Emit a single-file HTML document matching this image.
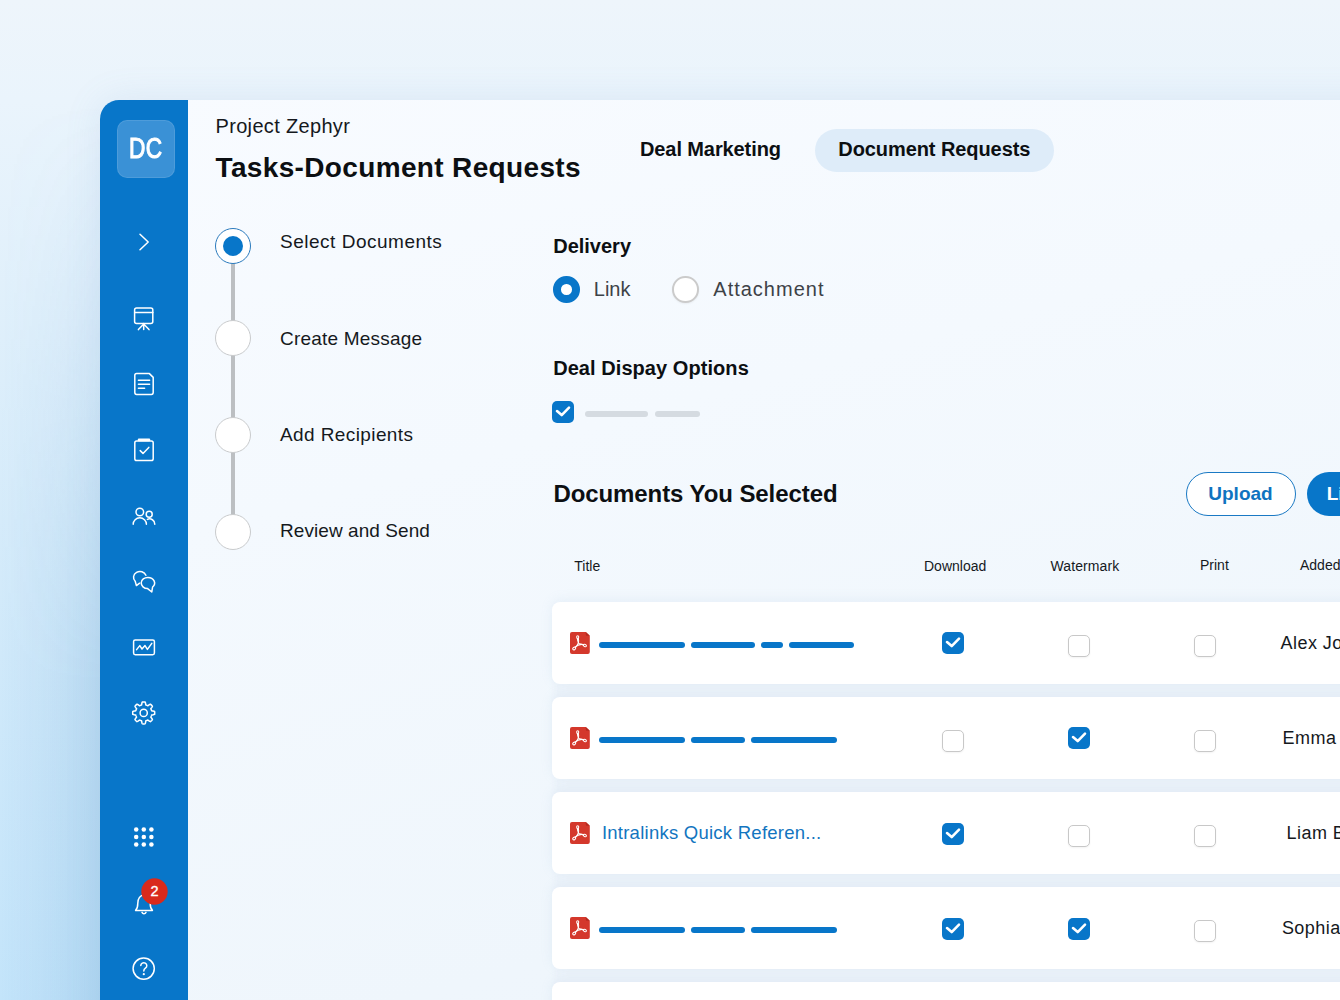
<!DOCTYPE html>
<html lang="en"><head><meta charset="utf-8"><title>Tasks-Document Requests</title>
<style>
*{box-sizing:border-box;margin:0;padding:0}
html,body{width:1340px;height:1000px;overflow:hidden}
body{position:relative;font-family:"Liberation Sans",sans-serif;background:#eef5fb;
 background-image:linear-gradient(180deg,#eef5fb 0,#eaf4fc 100px,#d5ebfa 520px,#c3e4fa 1000px);}
.t{position:absolute;line-height:1;white-space:nowrap}
.abs{position:absolute}
#panel{position:absolute;left:100px;top:100px;width:1300px;height:960px;background:linear-gradient(165deg,#f8fbff 0%,#f4f9fe 35%,#eff6fc 75%,#edf5fc 100%);border-top-left-radius:19px;box-shadow:0 0 36px rgba(110,150,195,.13);overflow:hidden}
#side{position:absolute;left:0;top:0;width:88px;height:100%;background:#0876c9}
.row{position:absolute;left:552px;width:900px;height:81.4px;background:#fff;border-radius:8px;box-shadow:0 -2px 12px rgba(150,175,205,.13)}
#gapbg{position:absolute;left:557px;top:616px;width:900px;height:500px;background:#ecf3fa;box-shadow:0 0 6px 3px #ecf3fa}
.cb{position:absolute;width:22px;height:22px;border-radius:5px}
.cb.on{background:#0876c9}
.cb.off{background:#fff;border:1.6px solid #c8c8c8;box-shadow:0 1px 2px rgba(0,0,0,.05)}
.bar{position:absolute;height:6px;border-radius:3px;background:#0876c9}
.gbar{position:absolute;height:6px;border-radius:3px;background:#d5dbe1}
.step{position:absolute;width:36px;height:36px;border-radius:50%;background:#fff;border:1px solid #c9cbcd}
svg{position:absolute;overflow:visible}
</style></head><body>
<div class="abs" style="left:0;top:100px;width:100px;height:900px;background:linear-gradient(90deg,rgba(70,140,200,0) 0%,rgba(70,140,200,.05) 40%,rgba(70,140,200,.16) 100%);-webkit-mask-image:linear-gradient(180deg,transparent 0,rgba(0,0,0,.35) 25%,#000 65%);mask-image:linear-gradient(180deg,transparent 0,rgba(0,0,0,.35) 25%,#000 65%)"></div>
<div id="panel"><div id="side"></div></div>
<div class="abs" style="left:117px;top:120px;width:57.5px;height:58px;border-radius:10px;background:#3a91d6;box-shadow:inset 0 0 0 1px rgba(255,255,255,.10)"></div>
<div class="t" id="dc" style="left:128.9px;top:134.15px;font-size:29px;font-weight:400;color:#fff;letter-spacing:0.6px;transform:scaleX(.78);transform-origin:left;-webkit-text-stroke:1.1px #fff;">DC</div>
<svg width="1340" height="1000" viewBox="0 0 1340 1000" style="left:0;top:0"><g fill="none" stroke="#fff" stroke-width="1.5" stroke-linecap="round" stroke-linejoin="round"><path d="M140 234.2 L148.2 242 L140 249.8"/><rect x="134.6" y="308" width="18.2" height="15.4" rx="2"/><path d="M134.6 312.4H152.8M143.7 323.6V329.6M143.7 324L138.4 329.6M143.7 324L149 329.6"/><path d="M136.6 373.6H149.4L153.2 377.4V392.6A1.8 1.8 0 0 1 151.4 394.4H136.6A1.8 1.8 0 0 1 134.8 392.6V375.4A1.8 1.8 0 0 1 136.6 373.6Z"/><path d="M138.4 380.2H149.6M138.4 384.3H149.6M138.4 388.3H144.6"/><rect x="134.8" y="441" width="18.4" height="19.6" rx="1.8"/><path d="M139 439.9H149" stroke-width="2.6"/><path d="M140.2 450.6L143 453.4L148.8 447.4"/><circle cx="139.8" cy="512" r="3.8"/><path d="M133.2 524.2A6.6 6.4 0 0 1 146.4 524.2"/><circle cx="149.2" cy="514.2" r="3"/><path d="M147.4 519.4A5.2 5.2 0 0 1 154.8 524.2"/><path d="M145.9 575.2A6.4 5.8 0 1 0 135.2 581.2L136.4 585.6L139.6 583.2"/><path d="M148 577.4A6.6 5.6 0 0 1 152.6 587L151.8 592L147.6 588.6A6.6 5.6 0 0 1 148 577.4Z"/><rect x="133.6" y="639.9" width="20.8" height="14.8" rx="1.6"/><path d="M136.6 649.6L139.8 645.6L142 649L145 645.6L147.4 649.4L151.8 643.4"/><path d="M143.70 701.90 L144.06 701.91 L144.42 701.92 L144.78 701.95 L145.14 701.99 L145.39 702.64 L145.57 703.48 L145.70 704.33 L145.82 704.98 L146.08 705.05 L146.34 705.14 L146.59 705.23 L146.84 705.32 L147.08 705.43 L147.33 705.55 L147.57 705.67 L147.80 705.80 L148.35 705.42 L149.03 704.92 L149.76 704.45 L150.40 704.17 L150.68 704.40 L150.95 704.63 L151.22 704.87 L151.48 705.12 L151.73 705.38 L151.97 705.65 L152.20 705.92 L152.43 706.20 L152.15 706.84 L151.68 707.57 L151.18 708.25 L150.80 708.80 L150.93 709.03 L151.05 709.27 L151.17 709.52 L151.28 709.76 L151.37 710.01 L151.46 710.26 L151.55 710.52 L151.62 710.78 L152.27 710.90 L153.12 711.03 L153.96 711.21 L154.61 711.46 L154.65 711.82 L154.68 712.18 L154.69 712.54 L154.70 712.90 L154.69 713.26 L154.68 713.62 L154.65 713.98 L154.61 714.34 L153.96 714.59 L153.12 714.77 L152.27 714.90 L151.62 715.02 L151.55 715.28 L151.46 715.54 L151.37 715.79 L151.28 716.04 L151.17 716.28 L151.05 716.53 L150.93 716.77 L150.80 717.00 L151.18 717.55 L151.68 718.23 L152.15 718.96 L152.43 719.60 L152.20 719.88 L151.97 720.15 L151.73 720.42 L151.48 720.68 L151.22 720.93 L150.95 721.17 L150.68 721.40 L150.40 721.63 L149.76 721.35 L149.03 720.88 L148.35 720.38 L147.80 720.00 L147.57 720.13 L147.33 720.25 L147.08 720.37 L146.84 720.48 L146.59 720.57 L146.34 720.66 L146.08 720.75 L145.82 720.82 L145.70 721.47 L145.57 722.32 L145.39 723.16 L145.14 723.81 L144.78 723.85 L144.42 723.88 L144.06 723.89 L143.70 723.90 L143.34 723.89 L142.98 723.88 L142.62 723.85 L142.26 723.81 L142.01 723.16 L141.83 722.32 L141.70 721.47 L141.58 720.82 L141.32 720.75 L141.06 720.66 L140.81 720.57 L140.56 720.48 L140.32 720.37 L140.07 720.25 L139.83 720.13 L139.60 720.00 L139.05 720.38 L138.37 720.88 L137.64 721.35 L137.00 721.63 L136.72 721.40 L136.45 721.17 L136.18 720.93 L135.92 720.68 L135.67 720.42 L135.43 720.15 L135.20 719.88 L134.97 719.60 L135.25 718.96 L135.72 718.23 L136.22 717.55 L136.60 717.00 L136.47 716.77 L136.35 716.53 L136.23 716.28 L136.12 716.04 L136.03 715.79 L135.94 715.54 L135.85 715.28 L135.78 715.02 L135.13 714.90 L134.28 714.77 L133.44 714.59 L132.79 714.34 L132.75 713.98 L132.72 713.62 L132.71 713.26 L132.70 712.90 L132.71 712.54 L132.72 712.18 L132.75 711.82 L132.79 711.46 L133.44 711.21 L134.28 711.03 L135.13 710.90 L135.78 710.78 L135.85 710.52 L135.94 710.26 L136.03 710.01 L136.12 709.76 L136.23 709.52 L136.35 709.27 L136.47 709.03 L136.60 708.80 L136.22 708.25 L135.72 707.57 L135.25 706.84 L134.97 706.20 L135.20 705.92 L135.43 705.65 L135.67 705.38 L135.92 705.12 L136.18 704.87 L136.45 704.63 L136.72 704.40 L137.00 704.17 L137.64 704.45 L138.37 704.92 L139.05 705.42 L139.60 705.80 L139.83 705.67 L140.07 705.55 L140.32 705.43 L140.56 705.32 L140.81 705.23 L141.06 705.14 L141.32 705.05 L141.58 704.98 L141.70 704.33 L141.83 703.48 L142.01 702.64 L142.26 701.99 L142.62 701.95 L142.98 701.92 L143.34 701.91Z"/><circle cx="143.7" cy="712.9" r="3.6"/><path d="M135.6 910.4H152.4C150.6 908.6 150.2 906.4 150.2 903.2C150.2 898.6 147.8 895 144 895C140.2 895 137.8 898.6 137.8 903.2C137.8 906.4 137.4 908.6 135.6 910.4Z"/><path d="M142 912.4A2.2 2.2 0 0 0 146 912.4"/><circle cx="143.7" cy="968.6" r="10.6"/><path d="M140.8 965.6A3 3 0 1 1 145.4 968.2C144.2 969 143.8 969.6 143.8 971"/></g><circle cx="143.8" cy="974.2" r="1.1" fill="#fff"/><circle cx="136.2" cy="829.6" r="2.25" fill="#fff"/><circle cx="136.2" cy="837.1" r="2.25" fill="#fff"/><circle cx="136.2" cy="844.6" r="2.25" fill="#fff"/><circle cx="143.8" cy="829.6" r="2.25" fill="#fff"/><circle cx="143.8" cy="837.1" r="2.25" fill="#fff"/><circle cx="143.8" cy="844.6" r="2.25" fill="#fff"/><circle cx="151.4" cy="829.6" r="2.25" fill="#fff"/><circle cx="151.4" cy="837.1" r="2.25" fill="#fff"/><circle cx="151.4" cy="844.6" r="2.25" fill="#fff"/><circle cx="154.5" cy="891.5" r="13.2" fill="#d92a1c"/></svg>
<div class="t" id="badge" style="left:150.4px;top:884.43px;font-size:14.5px;font-weight:400;color:#fff;letter-spacing:0px;-webkit-text-stroke:0.35px #fff;">2</div>
<div class="t" id="proj" style="left:215.5px;top:115.87px;font-size:20px;font-weight:400;color:#15191d;letter-spacing:0.33px;">Project Zephyr</div>
<div class="t" id="title" style="left:215.5px;top:154.00px;font-size:28px;font-weight:700;color:#0c0f12;letter-spacing:0.35px;">Tasks-Document Requests</div>
<div class="t" id="tab1" style="left:640px;top:139.07px;font-size:20px;font-weight:700;color:#0c0f12;letter-spacing:-0.1px;">Deal Marketing</div>
<div class="abs" style="left:815px;top:128.5px;width:239px;height:43.5px;border-radius:22px;background:#deecf9"></div>
<div class="t" id="tab2" style="left:838.3px;top:139.07px;font-size:20px;font-weight:700;color:#0c0f12;letter-spacing:-0.08px;">Document Requests</div>
<div class="abs" style="left:231.2px;top:250px;width:3.6px;height:280px;background:#bcbfc2"></div>
<div class="step" style="left:215.1px;top:228.2px;border:1.3px solid #2a7abd"></div>
<div class="abs" style="left:222.9px;top:236px;width:20.2px;height:20.2px;border-radius:50%;background:#0876c9"></div>
<div class="step" style="left:215px;top:320.2px"></div>
<div class="step" style="left:215px;top:417.2px"></div>
<div class="step" style="left:215px;top:513.6px"></div>
<div class="t" id="s1" style="left:280px;top:232.32px;font-size:19px;font-weight:400;color:#15191d;letter-spacing:0.51px;">Select Documents</div>
<div class="t" id="s2" style="left:280px;top:328.72px;font-size:19px;font-weight:400;color:#15191d;letter-spacing:0.21px;">Create Message</div>
<div class="t" id="s3" style="left:280px;top:424.82px;font-size:19px;font-weight:400;color:#15191d;letter-spacing:0.4px;">Add Recipients</div>
<div class="t" id="s4" style="left:280px;top:521.22px;font-size:19px;font-weight:400;color:#15191d;letter-spacing:0.07px;">Review and Send</div>
<div class="t" id="deliv" style="left:553.2px;top:235.57px;font-size:20px;font-weight:700;color:#0c0f12;letter-spacing:0px;">Delivery</div>
<div class="abs" style="left:553px;top:276px;width:26.5px;height:26.5px;border-radius:50%;border:8px solid #0876c9;background:#fff"></div>
<div class="t" id="link" style="left:593.8px;top:279.17px;font-size:20px;font-weight:400;color:#3d4247;letter-spacing:0px;">Link</div>
<div class="abs" style="left:672px;top:276px;width:26.5px;height:26.5px;border-radius:50%;border:2px solid #cbcbcb;background:#fff;box-shadow:0 1px 2px rgba(0,0,0,.05)"></div>
<div class="t" id="attach" style="left:713.3px;top:279.17px;font-size:20px;font-weight:400;color:#3d4247;letter-spacing:1.0px;">Attachment</div>
<div class="t" id="ddo" style="left:553.2px;top:357.67px;font-size:20px;font-weight:700;color:#0c0f12;letter-spacing:0.06px;">Deal Dispay Options</div>
<div class="cb on" style="left:552px;top:401px"><svg width="22" height="22" viewBox="0 0 22 22" style="left:0;top:0"><path d="M5 10.1 L9.7 14.1 L17 6.7" fill="none" stroke="#fff" stroke-width="2.6" stroke-linecap="round" stroke-linejoin="round"/></svg></div>
<div class="gbar" style="left:585px;top:410.6px;width:63px"></div><div class="gbar" style="left:655px;top:410.6px;width:45px"></div>
<div class="t" id="dys" style="left:553.4px;top:481.88px;font-size:24px;font-weight:700;color:#0c0f12;letter-spacing:-0.08px;">Documents You Selected</div>
<div class="abs" style="left:1186px;top:472px;width:109.5px;height:44px;border-radius:22px;border:1.8px solid #1a79c4;background:#fff"></div>
<div class="t" id="upload" style="left:1208.3px;top:483.92px;font-size:19px;font-weight:700;color:#0f73c0;letter-spacing:0px;">Upload</div>
<div class="abs" style="left:1307px;top:472px;width:109.5px;height:44px;border-radius:22px;background:#0876c9"></div>
<div class="t" id="li" style="left:1326.75px;top:483.92px;font-size:19px;font-weight:700;color:#fff;letter-spacing:0px;">Link</div>
<div class="t" id="hTitle" style="left:574.3px;top:559.05px;font-size:14px;font-weight:400;color:#15191d;letter-spacing:0px;">Title</div>
<div class="t" id="hDown" style="left:924px;top:559.05px;font-size:14px;font-weight:400;color:#15191d;letter-spacing:0px;">Download</div>
<div class="t" id="hWater" style="left:1050.5px;top:559.05px;font-size:14px;font-weight:400;color:#15191d;letter-spacing:0.1px;">Watermark</div>
<div class="t" id="hPrint" style="left:1200px;top:557.85px;font-size:14px;font-weight:400;color:#15191d;letter-spacing:0px;">Print</div>
<div class="t" id="hAdded" style="left:1300px;top:557.85px;font-size:14px;font-weight:400;color:#15191d;letter-spacing:0px;">Added by</div>
<div id="gapbg"></div>
<div class="row" style="top:602.2px"><svg width="19.8" height="22.1" viewBox="0 0 19.8 22.1" style="left:18px;top:29.7px"><path d="M2 0H15.8L19.8 3.8V20.1A2 2 0 0 1 17.8 22.1H2A2 2 0 0 1 0 20.1V2A2 2 0 0 1 2 0Z" fill="#d4382c"/><path d="M15.8 0L19.8 3.8H16.8A1 1 0 0 1 15.8 2.8Z" fill="#b52a20"/><g fill="none" stroke="#fff" stroke-width="1.05" stroke-linecap="round" stroke-linejoin="round"><path d="M7.3 6.2C7.4 8.4 8 10.2 8.9 11.6C10.6 12 12.2 12.5 13.5 13.2"/><path d="M8.3 6.2C8.9 8 8.6 10 8 11.8C7.2 13.4 6.2 14.8 5.4 15.6"/><path d="M5 15.2C6.8 13.4 10 12 13.4 12.5"/><ellipse cx="7.7" cy="5.1" rx="1.05" ry="1.4"/><ellipse cx="4.2" cy="16.5" rx="1.6" ry="1.2" transform="rotate(-35 4.2 16.5)"/><ellipse cx="14.9" cy="13.5" rx="1.6" ry="1.1" transform="rotate(22 14.9 13.5)"/></g></svg><div class="bar" style="left:46.8px;top:39.7px;width:86.6px"></div><div class="bar" style="left:138.7px;top:39.7px;width:64.8px"></div><div class="bar" style="left:209.2px;top:39.7px;width:22.1px"></div><div class="bar" style="left:236.7px;top:39.7px;width:65.3px"></div><div class="cb on" style="left:389.5px;top:30.3px"><svg width="22" height="22" viewBox="0 0 22 22" style="left:0;top:0"><path d="M5 10.1 L9.7 14.1 L17 6.7" fill="none" stroke="#fff" stroke-width="2.6" stroke-linecap="round" stroke-linejoin="round"/></svg></div><div class="cb off" style="left:515.6px;top:33px"></div><div class="cb off" style="left:641.9px;top:33px"></div></div>
<div class="t" id="nm0" style="left:1280.6px;top:633.96px;font-size:18px;font-weight:400;color:#15191d;letter-spacing:0.45px;">Alex Johnson</div>
<div class="row" style="top:697.2px"><svg width="19.8" height="22.1" viewBox="0 0 19.8 22.1" style="left:18px;top:29.7px"><path d="M2 0H15.8L19.8 3.8V20.1A2 2 0 0 1 17.8 22.1H2A2 2 0 0 1 0 20.1V2A2 2 0 0 1 2 0Z" fill="#d4382c"/><path d="M15.8 0L19.8 3.8H16.8A1 1 0 0 1 15.8 2.8Z" fill="#b52a20"/><g fill="none" stroke="#fff" stroke-width="1.05" stroke-linecap="round" stroke-linejoin="round"><path d="M7.3 6.2C7.4 8.4 8 10.2 8.9 11.6C10.6 12 12.2 12.5 13.5 13.2"/><path d="M8.3 6.2C8.9 8 8.6 10 8 11.8C7.2 13.4 6.2 14.8 5.4 15.6"/><path d="M5 15.2C6.8 13.4 10 12 13.4 12.5"/><ellipse cx="7.7" cy="5.1" rx="1.05" ry="1.4"/><ellipse cx="4.2" cy="16.5" rx="1.6" ry="1.2" transform="rotate(-35 4.2 16.5)"/><ellipse cx="14.9" cy="13.5" rx="1.6" ry="1.1" transform="rotate(22 14.9 13.5)"/></g></svg><div class="bar" style="left:46.8px;top:39.7px;width:86.6px"></div><div class="bar" style="left:138.7px;top:39.7px;width:54.3px"></div><div class="bar" style="left:199.0px;top:39.7px;width:86.0px"></div><div class="cb off" style="left:389.5px;top:33px"></div><div class="cb on" style="left:515.6px;top:30.3px"><svg width="22" height="22" viewBox="0 0 22 22" style="left:0;top:0"><path d="M5 10.1 L9.7 14.1 L17 6.7" fill="none" stroke="#fff" stroke-width="2.6" stroke-linecap="round" stroke-linejoin="round"/></svg></div><div class="cb off" style="left:641.9px;top:33px"></div></div>
<div class="t" id="nm1" style="left:1282.6px;top:728.96px;font-size:18px;font-weight:400;color:#15191d;letter-spacing:0.45px;">Emma Wilson</div>
<div class="row" style="top:792.3px"><svg width="19.8" height="22.1" viewBox="0 0 19.8 22.1" style="left:18px;top:29.7px"><path d="M2 0H15.8L19.8 3.8V20.1A2 2 0 0 1 17.8 22.1H2A2 2 0 0 1 0 20.1V2A2 2 0 0 1 2 0Z" fill="#d4382c"/><path d="M15.8 0L19.8 3.8H16.8A1 1 0 0 1 15.8 2.8Z" fill="#b52a20"/><g fill="none" stroke="#fff" stroke-width="1.05" stroke-linecap="round" stroke-linejoin="round"><path d="M7.3 6.2C7.4 8.4 8 10.2 8.9 11.6C10.6 12 12.2 12.5 13.5 13.2"/><path d="M8.3 6.2C8.9 8 8.6 10 8 11.8C7.2 13.4 6.2 14.8 5.4 15.6"/><path d="M5 15.2C6.8 13.4 10 12 13.4 12.5"/><ellipse cx="7.7" cy="5.1" rx="1.05" ry="1.4"/><ellipse cx="4.2" cy="16.5" rx="1.6" ry="1.2" transform="rotate(-35 4.2 16.5)"/><ellipse cx="14.9" cy="13.5" rx="1.6" ry="1.1" transform="rotate(22 14.9 13.5)"/></g></svg><div class="cb on" style="left:389.5px;top:30.3px"><svg width="22" height="22" viewBox="0 0 22 22" style="left:0;top:0"><path d="M5 10.1 L9.7 14.1 L17 6.7" fill="none" stroke="#fff" stroke-width="2.6" stroke-linecap="round" stroke-linejoin="round"/></svg></div><div class="cb off" style="left:515.6px;top:33px"></div><div class="cb off" style="left:641.9px;top:33px"></div></div>
<div class="t" id="lnk2" style="left:601.9px;top:823.64px;font-size:18.5px;font-weight:400;color:#1275c0;letter-spacing:0.25px;">Intralinks Quick Referen...</div>
<div class="t" id="nm2" style="left:1286.6px;top:824.06px;font-size:18px;font-weight:400;color:#15191d;letter-spacing:0.45px;">Liam Brown</div>
<div class="row" style="top:887.4px"><svg width="19.8" height="22.1" viewBox="0 0 19.8 22.1" style="left:18px;top:29.7px"><path d="M2 0H15.8L19.8 3.8V20.1A2 2 0 0 1 17.8 22.1H2A2 2 0 0 1 0 20.1V2A2 2 0 0 1 2 0Z" fill="#d4382c"/><path d="M15.8 0L19.8 3.8H16.8A1 1 0 0 1 15.8 2.8Z" fill="#b52a20"/><g fill="none" stroke="#fff" stroke-width="1.05" stroke-linecap="round" stroke-linejoin="round"><path d="M7.3 6.2C7.4 8.4 8 10.2 8.9 11.6C10.6 12 12.2 12.5 13.5 13.2"/><path d="M8.3 6.2C8.9 8 8.6 10 8 11.8C7.2 13.4 6.2 14.8 5.4 15.6"/><path d="M5 15.2C6.8 13.4 10 12 13.4 12.5"/><ellipse cx="7.7" cy="5.1" rx="1.05" ry="1.4"/><ellipse cx="4.2" cy="16.5" rx="1.6" ry="1.2" transform="rotate(-35 4.2 16.5)"/><ellipse cx="14.9" cy="13.5" rx="1.6" ry="1.1" transform="rotate(22 14.9 13.5)"/></g></svg><div class="bar" style="left:46.8px;top:39.7px;width:86.6px"></div><div class="bar" style="left:138.7px;top:39.7px;width:54.3px"></div><div class="bar" style="left:199.0px;top:39.7px;width:86.0px"></div><div class="cb on" style="left:389.5px;top:30.3px"><svg width="22" height="22" viewBox="0 0 22 22" style="left:0;top:0"><path d="M5 10.1 L9.7 14.1 L17 6.7" fill="none" stroke="#fff" stroke-width="2.6" stroke-linecap="round" stroke-linejoin="round"/></svg></div><div class="cb on" style="left:515.6px;top:30.3px"><svg width="22" height="22" viewBox="0 0 22 22" style="left:0;top:0"><path d="M5 10.1 L9.7 14.1 L17 6.7" fill="none" stroke="#fff" stroke-width="2.6" stroke-linecap="round" stroke-linejoin="round"/></svg></div><div class="cb off" style="left:641.9px;top:33px"></div></div>
<div class="t" id="nm3" style="left:1281.9px;top:919.16px;font-size:18px;font-weight:400;color:#15191d;letter-spacing:0.45px;">Sophia Davis</div>
<div class="row" style="top:982.4px"><svg width="19.8" height="22.1" viewBox="0 0 19.8 22.1" style="left:18px;top:29.7px"><path d="M2 0H15.8L19.8 3.8V20.1A2 2 0 0 1 17.8 22.1H2A2 2 0 0 1 0 20.1V2A2 2 0 0 1 2 0Z" fill="#d4382c"/><path d="M15.8 0L19.8 3.8H16.8A1 1 0 0 1 15.8 2.8Z" fill="#b52a20"/><g fill="none" stroke="#fff" stroke-width="1.05" stroke-linecap="round" stroke-linejoin="round"><path d="M7.3 6.2C7.4 8.4 8 10.2 8.9 11.6C10.6 12 12.2 12.5 13.5 13.2"/><path d="M8.3 6.2C8.9 8 8.6 10 8 11.8C7.2 13.4 6.2 14.8 5.4 15.6"/><path d="M5 15.2C6.8 13.4 10 12 13.4 12.5"/><ellipse cx="7.7" cy="5.1" rx="1.05" ry="1.4"/><ellipse cx="4.2" cy="16.5" rx="1.6" ry="1.2" transform="rotate(-35 4.2 16.5)"/><ellipse cx="14.9" cy="13.5" rx="1.6" ry="1.1" transform="rotate(22 14.9 13.5)"/></g></svg><div class="cb off" style="left:389.5px;top:33px"></div><div class="cb off" style="left:515.6px;top:33px"></div><div class="cb off" style="left:641.9px;top:33px"></div></div>
</body></html>
